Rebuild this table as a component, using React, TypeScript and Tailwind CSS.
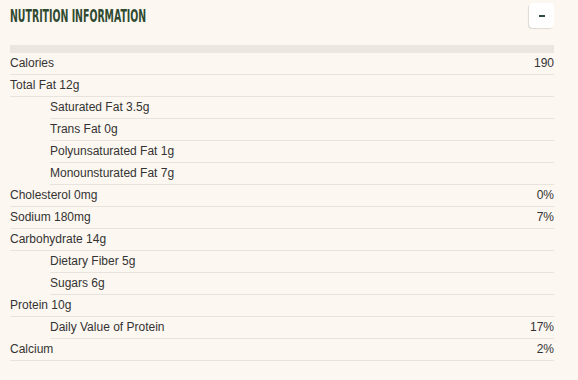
const rows: { label: string; value?: string; sub?: boolean }[] = [
  { label: "Calories", value: "190" },
  { label: "Total Fat 12g" },
  { label: "Saturated Fat 3.5g", sub: true },
  { label: "Trans Fat 0g", sub: true },
  { label: "Polyunsaturated Fat 1g", sub: true },
  { label: "Monounsturated Fat 7g", sub: true },
  { label: "Cholesterol 0mg", value: "0%" },
  { label: "Sodium 180mg", value: "7%" },
  { label: "Carbohydrate 14g" },
  { label: "Dietary Fiber 5g", sub: true },
  { label: "Sugars 6g", sub: true },
  { label: "Protein 10g" },
  { label: "Daily Value of Protein", value: "17%", sub: true },
  { label: "Calcium", value: "2%" },
];

export default function App() {
  return (
    <div className="min-h-[380px] w-[578px] bg-[#fcf7f0] pl-[10px] pr-[24px] font-['Liberation_Sans',Arial,sans-serif] text-[12px] text-[#333]">
      {/* Header */}
      <div className="flex h-[45px] items-start justify-between">
        <h2 className="mt-[5px] origin-left scale-x-[0.58] whitespace-nowrap font-['DejaVu_Sans_Condensed',sans-serif] text-[18px] font-bold leading-[22px] text-[#2f4a30]">
          NUTRITION INFORMATION
        </h2>
        <button className="mt-[3px] flex h-[25px] w-[25px] items-center justify-center rounded-[4px] bg-white shadow-[-1px_1px_1px_rgba(0,0,0,0.12)]">
          <span className="block h-[2px] w-[6px] bg-[#2f4d44]" />
        </button>
      </div>

      {/* Table */}
      <div className="h-[8px] bg-[#ebe6df]" />
      {rows.map((r) => (
        <div
          key={r.label}
          className={`flex h-[22px] items-center justify-between border-b border-[#e8e3dc] pb-[2px] ${
            r.sub ? "ml-[40px]" : ""
          }`}
        >
          <span>{r.label}</span>
          {r.value && <span>{r.value}</span>}
        </div>
      ))}
    </div>
  );
}
